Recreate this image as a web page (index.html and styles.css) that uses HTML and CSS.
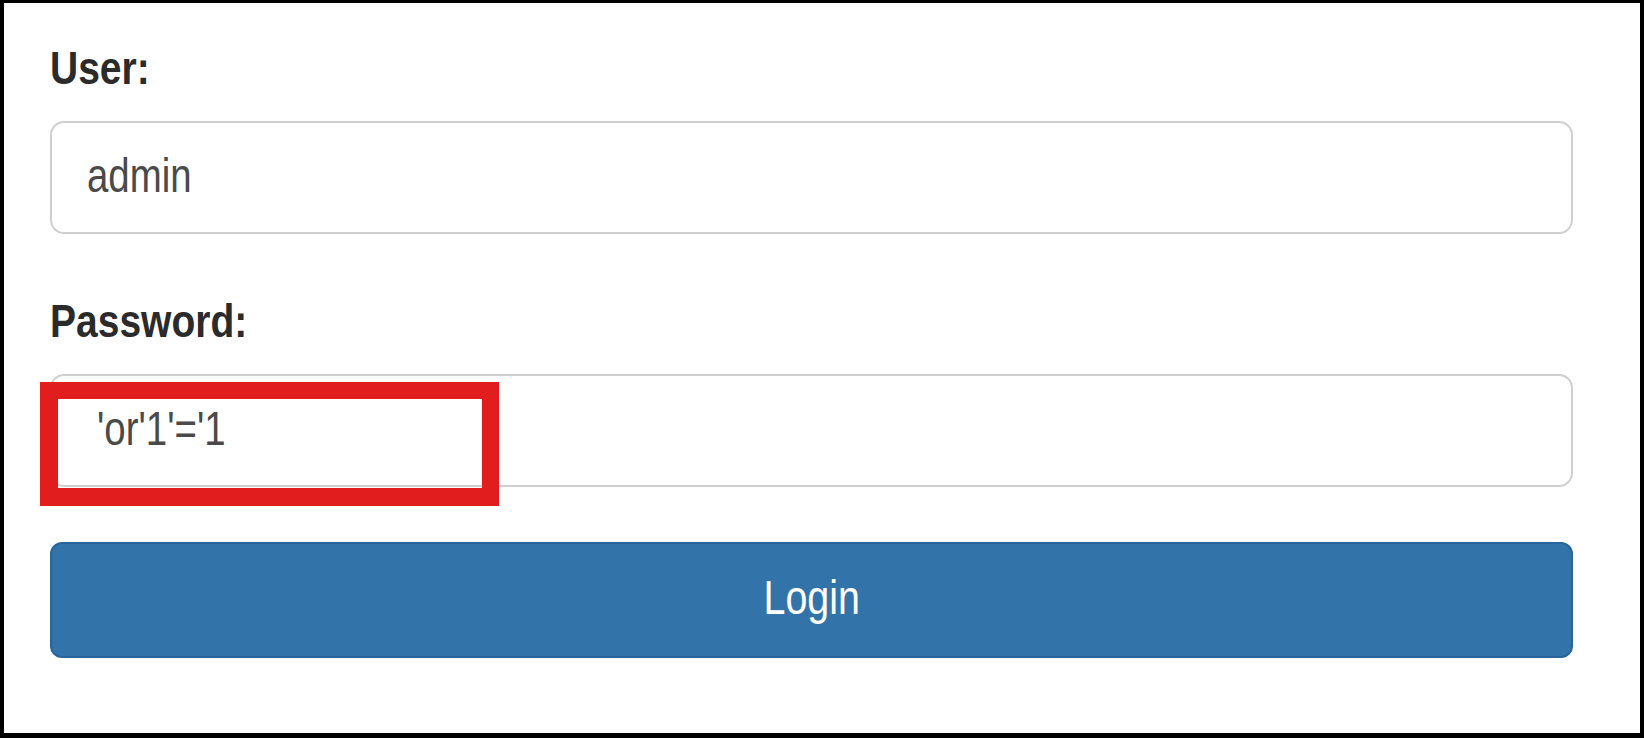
FILE: index.html
```html
<!DOCTYPE html>
<html lang="en">
<head>
<meta charset="utf-8">
<title>Login</title>
<link rel="stylesheet" href="styles.css">
</head>
<body>
<div class="frame">
  <div class="field">
    <label class="label"><span class="squeeze squeeze--label">User:</span></label>
    <div class="input"><span class="squeeze">admin</span></div>
  </div>
  <div class="field field--second">
    <label class="label"><span class="squeeze squeeze--label">Password:</span></label>
    <div class="input input--marked">
      <span class="squeeze input__offset">'or'1'='1</span>
      <div class="highlight"></div>
    </div>
  </div>
  <div class="btn"><span class="squeeze squeeze--center">Login</span></div>
</div>
</body>
</html>
```

FILE: styles.css
```css
html, body {
  margin: 0;
  padding: 0;
  background: #ffffff;
}

.frame {
  box-sizing: border-box;
  width: 1644px;
  height: 738px;
  border-style: solid;
  border-color: #000000;
  border-width: 3px 4px 5px 4px;
  padding: 41px 67px 0 46px;
  background: #ffffff;
  font-family: "Liberation Sans", Arial, sans-serif;
}

.field {
  display: flex;
  flex-direction: column;
}

.field--second {
  margin-top: 63px;
}

.label {
  display: block;
  height: 48px;
  font-size: 47px;
  line-height: 48px;
  font-weight: 700;
  color: #2b2b2b;
  margin-bottom: 29px;
  white-space: nowrap;
}

.squeeze {
  display: inline-block;
  transform: scaleX(0.8);
  transform-origin: left center;
  white-space: pre;
}

.squeeze--label {
  transform: scaleX(0.83);
}

.squeeze--center {
  transform: scaleX(0.82);
  transform-origin: center center;
}

.input {
  position: relative;
  box-sizing: border-box;
  height: 113px;
  border: 2px solid #cfcfcf;
  border-radius: 14px;
  padding-left: 35px;
  font-size: 48px;
  line-height: 105px;
  color: #4a4a4a;
  background: #ffffff;
}

.input__offset {
  margin-left: 10px;
}

.highlight {
  position: absolute;
  left: -12px;
  top: 6px;
  width: 459px;
  height: 124px;
  box-sizing: border-box;
  border: 17px solid #e21d1d;
  border-bottom-width: 18px;
  border-left-width: 18px;
}

.btn {
  box-sizing: border-box;
  margin-top: 55px;
  height: 116px;
  border: 2px solid #28659c;
  border-radius: 12px;
  background: #3274aa;
  color: #ffffff;
  font-size: 48px;
  line-height: 108px;
  text-align: center;
}
```
